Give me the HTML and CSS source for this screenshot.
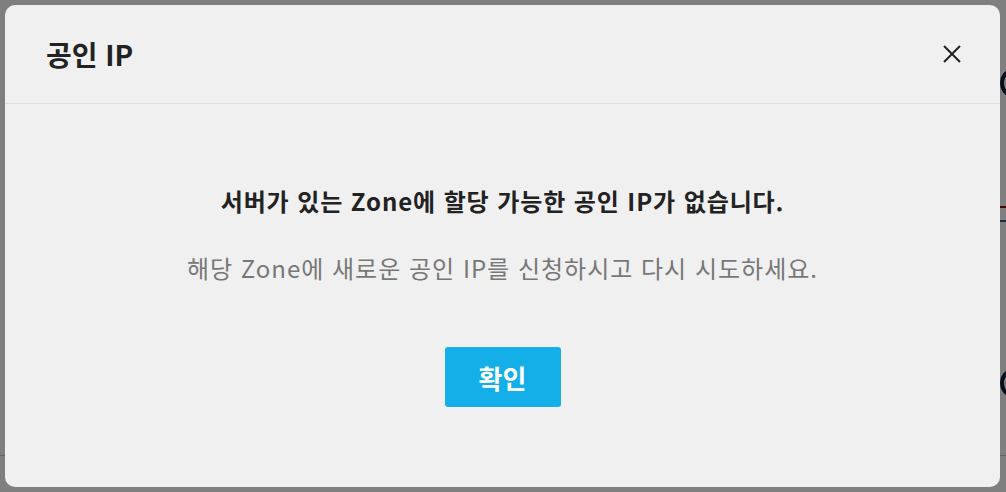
FILE: index.html
```html
<!DOCTYPE html>
<html lang="ko">
<head>
<meta charset="utf-8">
<title>공인 IP</title>
<link rel="stylesheet" href="styles.css">
</head>
<body>
<div class="page">
  <div class="page-row row-a"><span class="ring"></span></div>
  <div class="page-row row-b"><span class="box"></span></div>
  <div class="page-row row-c"><span class="ring"></span></div>
  <div class="page-rule"></div>
</div>
<div class="overlay"></div>
<div class="modal" role="dialog">
  <div class="modal-header">
    <h2 class="modal-title">공인 IP</h2>
    <button class="close" aria-label="닫기">
      <svg width="20" height="20" viewBox="0 0 20 20"><path d="M2 2 L18 18 M18 2 L2 18" stroke="#222" stroke-width="2" fill="none"/></svg>
    </button>
  </div>
  <div class="modal-body">
    <p class="msg-main">서버가 있는 Zone에 할당 가능한 공인 IP가 없습니다.</p>
    <p class="msg-sub">해당 Zone에 새로운 공인 IP를 신청하시고 다시 시도하세요.</p>
    <button class="ok">확인</button>
  </div>
</div>
</body>
</html>
```
FILE: styles.css
```css
* { box-sizing: border-box; }
html, body { margin: 0; padding: 0; }
body {
  width: 1006px;
  height: 492px;
  overflow: hidden;
  background: #ffffff;
  font-family: "Noto Sans CJK KR", "Noto Sans", sans-serif;
  position: relative;
}
.page { width: 1006px; height: 492px; display: flex; flex-direction: column; }
.page-row { display: flex; justify-content: flex-end; }
.row-a { margin-top: 70px; height: 30px; }
.row-b { margin-top: 100px; height: 30px; }
.row-c { margin-top: 140px; height: 30px; }
.ring {
  width: 20px; height: 26px;
  border: 4px solid #0b1e3a;
  border-radius: 50%;
  margin-right: -14px;
}
.box {
  width: 22px; height: 16px;
  border: 2px solid #1e5f96;
  border-top-color: #8a1010;
  margin-right: -14px;
  margin-top: 6px;
}
.page-rule { margin-top: 55px; border-top: 1px solid #c8c8c8; }
.overlay {
  position: absolute; inset: 0;
  background: rgba(0, 0, 0, 0.5);
}
.modal {
  position: absolute;
  left: 5px; top: 5px;
  width: 995px; height: 482px;
  background: #f0f0f0;
  border-radius: 10px;
  display: flex;
  flex-direction: column;
}
.modal-header {
  height: 99px;
  border-bottom: 1px solid #dedede;
  display: flex;
  align-items: center;
  justify-content: space-between;
  padding: 0 38px 0 41px;
}
.modal-title {
  margin: 0;
  font-size: 28px;
  font-weight: 700;
  color: #222;
  line-height: 34px;
}
.close {
  border: 0; background: transparent; padding: 0; width: 20px; height: 20px;
  display: flex; align-items: center; justify-content: center; cursor: pointer;
}
.modal-body {
  display: flex;
  flex-direction: column;
  align-items: center;
  padding-top: 82px;
}
.msg-main {
  margin: 0;
  font-size: 24px;
  line-height: 30px;
  font-weight: 700;
  letter-spacing: 0.9px;
  color: #222;
}
.msg-sub {
  margin: 37px 0 0;
  font-size: 24px;
  line-height: 30px;
  font-weight: 400;
  letter-spacing: 1px;
  color: #777;
}
.ok {
  margin-top: 64px;
  width: 116px;
  height: 60px;
  border: 0;
  border-radius: 3px;
  background: #14aee8;
  color: #fff;
  font-family: inherit;
  font-size: 26px;
  font-weight: 700;
  cursor: pointer;
}
```
